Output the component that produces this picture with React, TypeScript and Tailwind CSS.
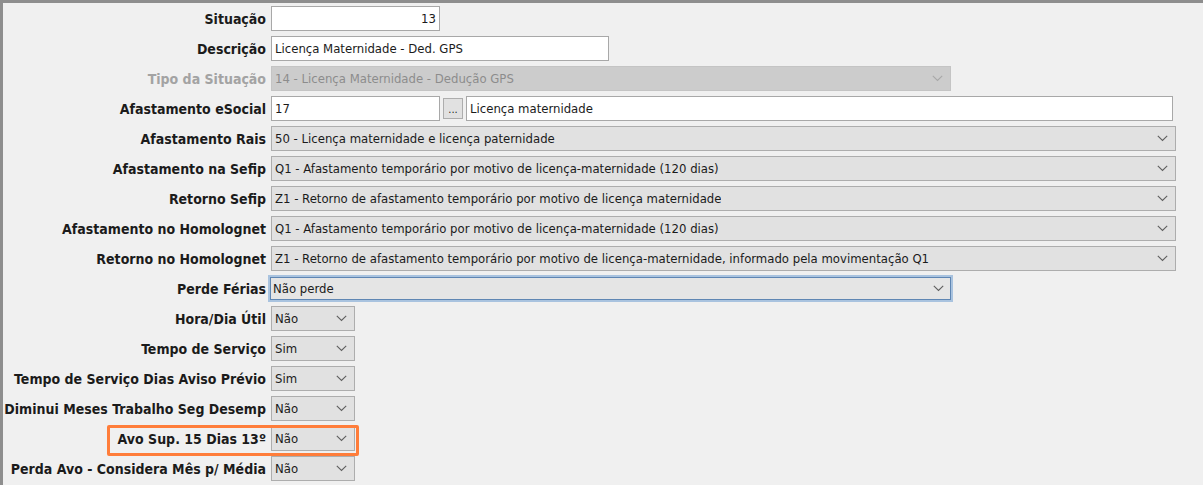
import React from "react";

const Chevron = ({ color = "#5f5f5f" }: { color?: string }) => (
  <svg width="11" height="7" viewBox="0 0 11 7" className="shrink-0">
    <path d="M0.8 0.8 L5.5 5.5 L10.2 0.8" fill="none" stroke={color} strokeWidth="1.1" />
  </svg>
);

const Label = ({ children, disabled }: { children: React.ReactNode; disabled?: boolean }) => (
  <div
    className={`w-[263px] shrink-0 text-right font-bold text-[14px] leading-none whitespace-nowrap ${
      disabled ? "text-[#a3a3a3]" : "text-[#1b1b1b]"
    }`}
  >
    {children}
  </div>
);

const Input = ({ w, value, right }: { w: string; value: string; right?: boolean }) => (
  <div
    className={`${w} h-[25px] bg-white border border-[#a8a8a8] flex items-center px-[3px] text-[13px] text-[#1b1b1b] ${
      right ? "justify-end" : ""
    }`}
  >
    {value}
  </div>
);

const Combo = ({ w, value, disabled }: { w: string; value: string; disabled?: boolean }) => (
  <div
    className={`${w} h-[25px] border flex items-center justify-between pl-[3px] pr-[7px] text-[13px] ${
      disabled
        ? "bg-[#cccccc] border-[#c4c4c4] text-[#8c8c8c]"
        : "bg-[#e1e1e1] border-[#adadad] text-[#1b1b1b]"
    }`}
  >
    <span className="whitespace-nowrap overflow-hidden">{value}</span>
    <Chevron color={disabled ? "#a8a8a8" : "#5f5f5f"} />
  </div>
);

const Row = ({ children }: { children: React.ReactNode }) => (
  <div className="flex items-center h-[25px] gap-[5px]">{children}</div>
);

export default function App() {
  return (
    <div
      className="w-[1203px] h-[485px] bg-[#f0f0f0] overflow-hidden"
      style={{ fontFamily: "Tahoma, 'DejaVu Sans Condensed', 'Liberation Sans', sans-serif" }}
    >
      <div className="relative h-full border-l-[3px] border-t-[3px] border-[#8e8e8e] pt-[3px] flex flex-col gap-[5px]">
        <Row>
          <Label>Situação</Label>
          <Input w="w-[169px]" value="13" right />
        </Row>
        <Row>
          <Label>Descrição</Label>
          <Input w="w-[338px]" value="Licença Maternidade - Ded. GPS" />
        </Row>
        <Row>
          <Label disabled>Tipo da Situação</Label>
          <Combo w="w-[680px]" value="14 - Licença Maternidade - Dedução GPS" disabled />
        </Row>
        <Row>
          <Label>Afastamento eSocial</Label>
          <div className="flex items-center gap-[3px]">
            <Input w="w-[169px]" value="17" />
            <div className="w-[20px] h-[21px] bg-[#e1e1e1] border border-[#adadad] flex items-end justify-center pb-[3px] text-[11px] leading-none text-[#222]">
              ...
            </div>
            <Input w="w-[707px]" value="Licença maternidade" />
          </div>
        </Row>
        <Row>
          <Label>Afastamento Rais</Label>
          <Combo w="w-[905px]" value="50 - Licença maternidade e licença paternidade" />
        </Row>
        <Row>
          <Label>Afastamento na Sefip</Label>
          <Combo w="w-[905px]" value="Q1 - Afastamento temporário por motivo de licença-maternidade (120 dias)" />
        </Row>
        <Row>
          <Label>Retorno Sefip</Label>
          <Combo w="w-[905px]" value="Z1 - Retorno de afastamento temporário por motivo de licença maternidade" />
        </Row>
        <Row>
          <Label>Afastamento no Homolognet</Label>
          <Combo w="w-[905px]" value="Q1 - Afastamento temporário por motivo de licença-maternidade (120 dias)" />
        </Row>
        <Row>
          <Label>Retorno no Homolognet</Label>
          <Combo
            w="w-[905px]"
            value="Z1 - Retorno de afastamento temporário por motivo de licença-maternidade, informado pela movimentação Q1"
          />
        </Row>
        <Row>
          <Label>Perde Férias</Label>
          <div className="w-[685px] h-[27px] -ml-[3px] border-2 border-[#a9c3df] flex">
            <div className="flex-1 border border-[#5f86b3] bg-[#e5e5e5] flex items-center justify-between pl-[2px] pr-[6px] text-[13px] text-[#1b1b1b]">
              <span>Não perde</span>
              <Chevron />
            </div>
          </div>
        </Row>
        <Row>
          <Label>Hora/Dia Útil</Label>
          <Combo w="w-[84px]" value="Não" />
        </Row>
        <Row>
          <Label>Tempo de Serviço</Label>
          <Combo w="w-[84px]" value="Sim" />
        </Row>
        <Row>
          <Label>Tempo de Serviço Dias Aviso Prévio</Label>
          <Combo w="w-[84px]" value="Sim" />
        </Row>
        <Row>
          <Label>Diminui Meses Trabalho Seg Desemp</Label>
          <Combo w="w-[84px]" value="Não" />
        </Row>
        <Row>
          <Label>Avo Sup. 15 Dias 13º</Label>
          <Combo w="w-[84px]" value="Não" />
        </Row>
        <Row>
          <Label>Perda Avo - Considera Mês p/ Média</Label>
          <Combo w="w-[84px]" value="Não" />
        </Row>
        <div className="absolute left-[104px] top-[422px] w-[252px] h-[31px] border-[3px] border-[#ff7d3a] rounded-[2px] pointer-events-none" />
      </div>
    </div>
  );
}
